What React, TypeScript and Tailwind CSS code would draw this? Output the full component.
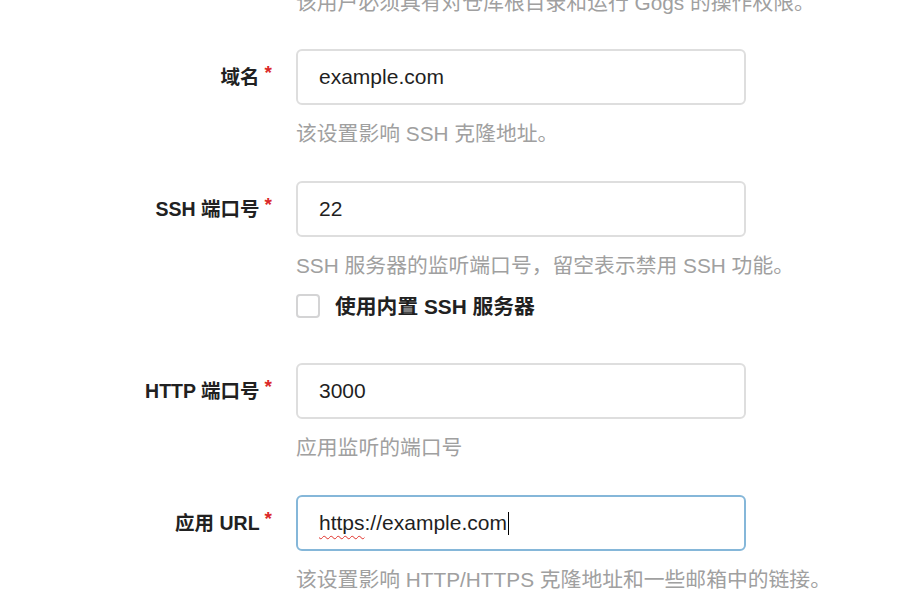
import React from "react";

const cjk = { fontFamily: '"Liberation Sans", "Noto Sans CJK SC", sans-serif' };

function Label({ text }: { text: string }) {
  return (
    <div className="w-[272px] flex justify-end items-center shrink-0">
      <span className="text-[19.5px] font-bold text-[#212121] leading-[28px]">{text}</span>
      <span className="text-[#db2828] text-[19px] font-bold leading-none ml-[5px] -mt-[10px]">*</span>
    </div>
  );
}

function Input({ value, focused }: { value: React.ReactNode; focused?: boolean }) {
  return (
    <div
      className={
        "ml-[24px] w-[450px] h-[56px] rounded-[6px] border-2 bg-white flex items-center pl-[21px] text-[21px] text-[#1f1f1f] " +
        (focused ? "border-[#85b7d9]" : "border-[#dedede]")
      }
    >
      {value}
    </div>
  );
}

function Help({ text }: { text: string }) {
  return (
    <div className="ml-[296px] mt-[15px] h-[28px] leading-[28px] text-[20.8px] text-[#a0a0a0] whitespace-nowrap">
      {text}
    </div>
  );
}

export default function App() {
  return (
    <div className="w-[901px] h-[612px] bg-white overflow-hidden" style={cjk}>
      <div className="-mt-[11px]">
        <div className="ml-[296px] h-[28px] leading-[28px] text-[20.8px] text-[#a0a0a0] whitespace-nowrap">
          该用户必须具有对仓库根目录和运行 Gogs 的操作权限。
        </div>

        <div className="mt-[32px] flex items-center">
          <Label text="域名" />
          <Input value="example.com" />
        </div>
        <Help text="该设置影响 SSH 克隆地址。" />

        <div className="mt-[33px] flex items-center">
          <Label text="SSH 端口号" />
          <Input value="22" />
        </div>
        <Help text="SSH 服务器的监听端口号，留空表示禁用 SSH 功能。" />
        <div className="ml-[296px] mt-[12px] h-[28px] flex items-center">
          <div className="w-[24px] h-[24px] rounded-[4px] border-2 border-[#d4d4d5] bg-white" />
          <span className="ml-[15px] text-[20.8px] font-bold text-[#212121] leading-[28px] mt-[2px]">使用内置 SSH 服务器</span>
        </div>

        <div className="mt-[43px] flex items-center">
          <Label text="HTTP 端口号" />
          <Input value="3000" />
        </div>
        <Help text="应用监听的端口号" />

        <div className="mt-[33px] flex items-center">
          <Label text="应用 URL" />
          <Input
            focused
            value={
              <span className="flex items-center">
                <span className="underline decoration-wavy decoration-[#e0302a] decoration-1 underline-offset-[5px]">https</span>
                <span>://example.com</span>
                <span className="inline-block w-[1px] h-[23px] bg-black ml-[1px]" />
              </span>
            }
          />
        </div>
        <Help text="该设置影响 HTTP/HTTPS 克隆地址和一些邮箱中的链接。" />
      </div>
    </div>
  );
}
